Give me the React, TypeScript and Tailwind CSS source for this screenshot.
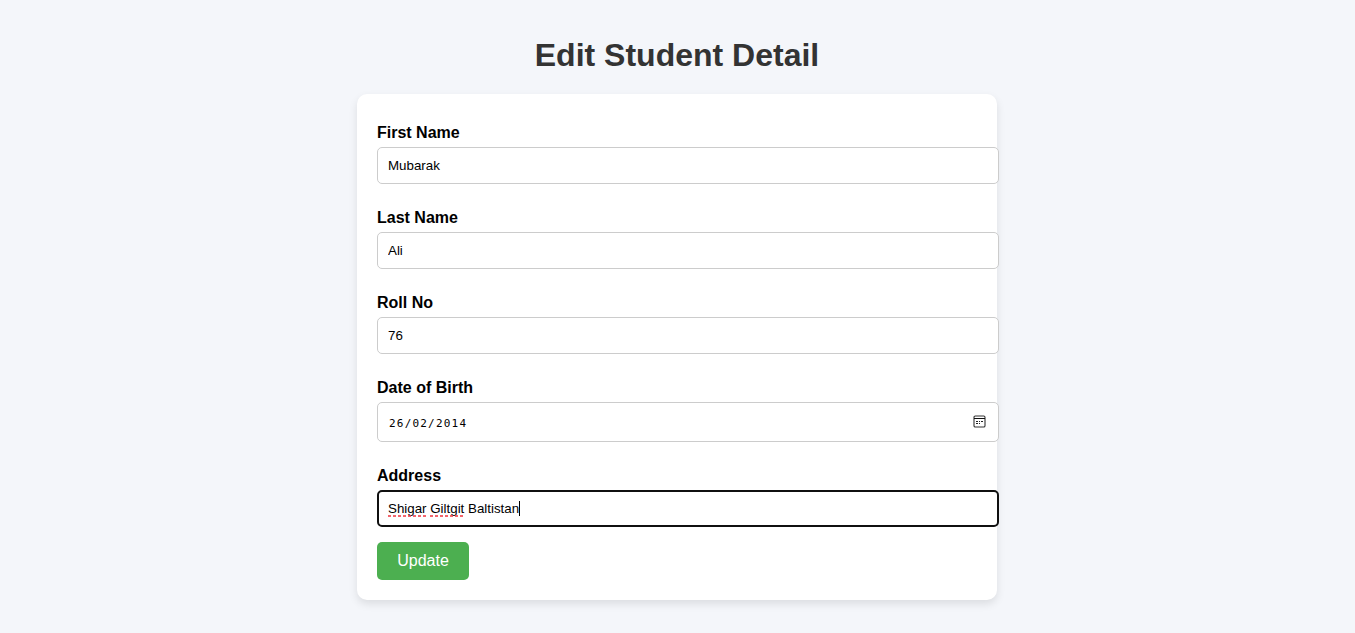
import type { ReactNode } from "react";

const box =
  "flex w-[622px] items-center rounded-[5px] bg-white px-[10px] font-['Liberation_Sans',Arial,sans-serif] text-[13.333px] leading-[15px] text-black";
const plain = "h-[37px] border border-[#ccc]";

function Field({ id, label, children }: { id: string; label: string; children: ReactNode }) {
  return (
    <div className="flex flex-col gap-[5px]">
      <label htmlFor={id} className="text-base leading-[18px] font-bold text-black">
        {label}
      </label>
      {children}
    </div>
  );
}

function CalendarIcon() {
  return (
    <svg width="13" height="13" viewBox="0 0 13 13" fill="none" className="mr-[2px] mb-px">
      <rect x="1" y="1" width="11" height="11" rx="1.3" stroke="#333" strokeWidth="1.1" />
      <path d="M1 3.5h11" stroke="#111" />
      <path d="M3 6.5h2M6 6.5h1M8 6.5h2M3 8.5h2M6 8.5h1" stroke="#222" />
    </svg>
  );
}

function Misspelled({ children }: { children: string }) {
  return (
    <span className="relative">
      {children}
      <span className="absolute inset-x-0 -bottom-px h-[2px] bg-[repeating-linear-gradient(90deg,#f03e48_0px,#f03e48_3px,transparent_3px,transparent_5px)] opacity-80" />
    </span>
  );
}

export default function App() {
  return (
    <div className="flex min-h-screen flex-col items-center bg-[#f4f6fa] pt-[37px] pr-px font-['Liberation_Sans',Arial,sans-serif]">
      <h1 className="text-[32px] leading-[37px] font-bold text-[#333]">Edit Student Detail</h1>
      <form
        onSubmit={(e) => e.preventDefault()}
        className="mt-5 h-[506px] w-[640px] rounded-[10px] bg-white px-5 pt-[30px] shadow-[0_4px_8px_rgba(0,0,0,0.1)]"
      >
        <div className="flex flex-col gap-[25px]">
          <Field id="first" label="First Name">
            <input id="first" defaultValue="Mubarak" className={`${box} ${plain}`} />
          </Field>
          <Field id="last" label="Last Name">
            <input id="last" defaultValue="Ali" className={`${box} ${plain}`} />
          </Field>
          <Field id="roll" label="Roll No">
            <input id="roll" defaultValue="76" className={`${box} ${plain}`} />
          </Field>
          <Field id="birth" label="Date of Birth">
            <div id="birth" className={`${box} h-10 justify-between border border-[#ccc]`}>
              <span className="pt-[2px] pl-px font-['DejaVu_Sans_Mono',monospace] text-[11px] tracking-[1.2px]">
                26/02/2014
              </span>
              <CalendarIcon />
            </div>
          </Field>
          <Field id="address" label="Address">
            <div id="address" className={`${box} h-[37px] border-2 border-[#101010] pl-[9px]`}>
              <span className="whitespace-pre">
                <Misspelled>Shigar</Misspelled> <Misspelled>Giltgit</Misspelled> Baltistan
              </span>
              <span className="h-[15px] w-px bg-black" />
            </div>
          </Field>
        </div>
        <button className="mt-[15px] h-[38px] w-[92px] rounded-[5px] bg-[#4caf50] text-base leading-[18px] text-white">
          Update
        </button>
      </form>
    </div>
  );
}
